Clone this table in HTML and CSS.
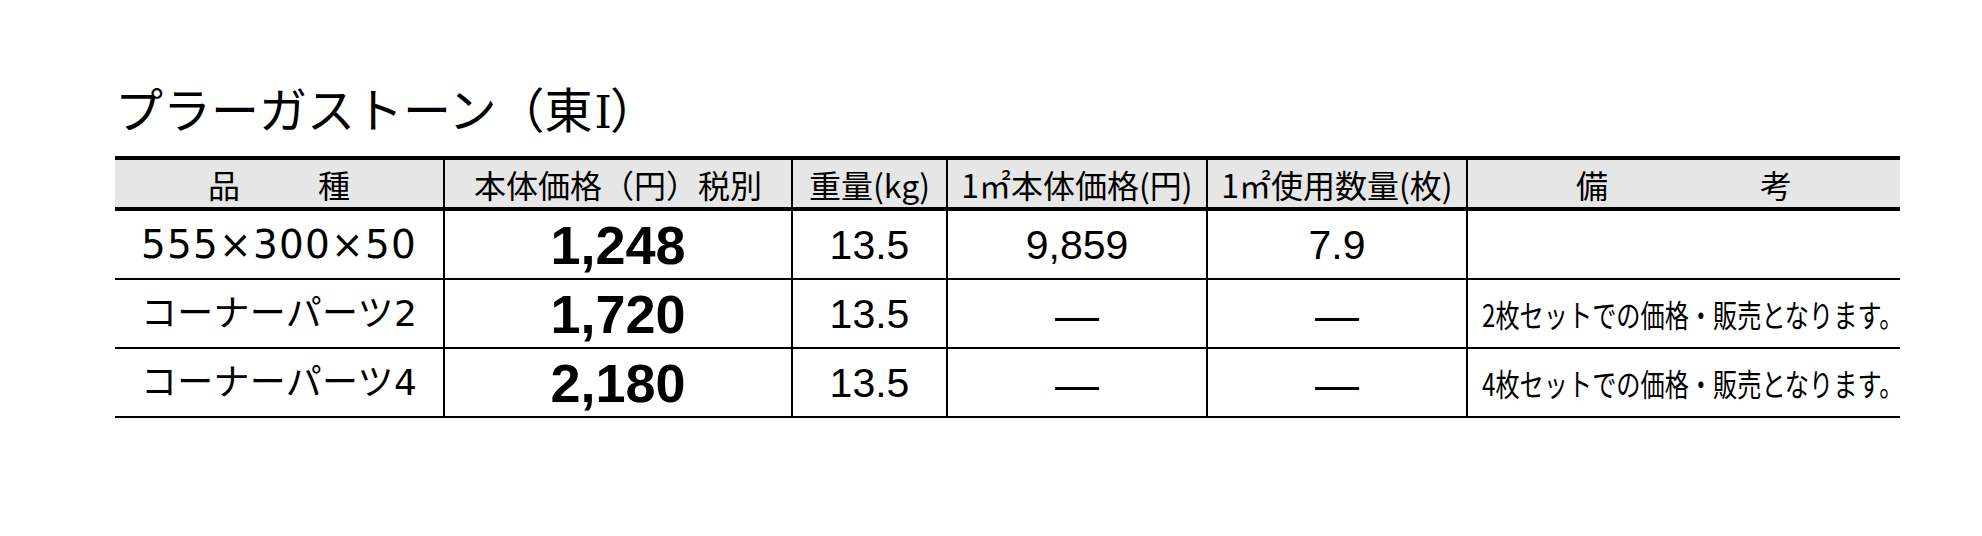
FILE: index.html
```html
<!DOCTYPE html>
<html lang="ja">
<head>
<meta charset="utf-8">
<title>プラーガストーン（東Ⅰ）</title>
<link rel="stylesheet" href="styles.css">
</head>
<body>
<div class="page">
  <h1 class="title">プラーガストーン（東<span class="roman">Ⅰ</span>）</h1>
  <div class="grid">
    <div class="cell head split first"><span>品</span><span>種</span></div>
    <div class="cell head">本体価格（円）税別</div>
    <div class="cell head">重量(kg)</div>
    <div class="cell head">1㎡本体価格(円)</div>
    <div class="cell head">1㎡使用数量(枚)</div>
    <div class="cell head split wide"><span>備</span><span>考</span></div>

    <div class="cell size first">555×300×50</div>
    <div class="cell price">1,248</div>
    <div class="cell num">13.5</div>
    <div class="cell num">9,859</div>
    <div class="cell num">7.9</div>
    <div class="cell note"></div>

    <div class="cell kana first">コーナーパーツ2</div>
    <div class="cell price">1,720</div>
    <div class="cell num">13.5</div>
    <div class="cell dash">—</div>
    <div class="cell dash">—</div>
    <div class="cell note"><span class="note-text">2枚セットでの価格・販売となります。</span></div>

    <div class="cell kana first">コーナーパーツ4</div>
    <div class="cell price">2,180</div>
    <div class="cell num">13.5</div>
    <div class="cell dash">—</div>
    <div class="cell dash">—</div>
    <div class="cell note"><span class="note-text">4枚セットでの価格・販売となります。</span></div>
  </div>
</div>
</body>
</html>
```
FILE: styles.css
```css
html, body {
  margin: 0;
  padding: 0;
  background: #ffffff;
}

.page {
  padding: 83px 0 0 115px;
  font-family: "Noto Sans CJK JP", "Liberation Sans", sans-serif;
  color: #000;
}

.title {
  margin: 0 0 25px 0;
  height: 48px;
  font-size: 48px;
  font-weight: 400;
  line-height: 48px;
  letter-spacing: 0;
  white-space: nowrap;
}

.roman {
  font-family: "DejaVu Serif", "Liberation Serif", serif;
  font-size: 44px;
  line-height: 0;
  margin: 0 -2px 0 2px;
}

.grid {
  display: grid;
  grid-template-columns: 328px 348px 155px 260px 260px 434px;
  grid-template-rows: 51px 69px 69px 69px;
  width: 1785px;
  border-top: 4px solid #000;
}

.cell {
  box-sizing: border-box;
  display: flex;
  align-items: center;
  justify-content: center;
  border-left: 2px solid #000;
  border-bottom: 2px solid #000;
  white-space: nowrap;
}

.cell.first {
  border-left: none;
}

.head {
  background: #e6e6e6;
  border-bottom: 4px solid #000;
  font-family: "Noto Sans CJK JP", sans-serif;
  font-size: 32px;
  line-height: 1;
}

.split {
  gap: 78px;
}

.split.wide {
  gap: 152px;
}

.size {
  font-family: "DejaVu Sans", sans-serif;
  font-size: 39px;
  letter-spacing: 1.2px;
}

.kana {
  font-family: "DejaVu Sans", "Noto Sans CJK JP", sans-serif;
  font-size: 36px;
  line-height: 1;
  letter-spacing: 0.3px;
}

.price {
  font-family: "Liberation Sans", Arial, sans-serif;
  font-weight: 700;
  font-size: 54px;
  line-height: 1;
}

.num {
  font-family: "Liberation Sans", Arial, sans-serif;
  font-size: 41px;
  line-height: 1;
  padding-top: 2px;
}

.dash {
  font-family: "Liberation Sans", Arial, sans-serif;
  font-size: 44px;
  line-height: 1;
  padding-top: 4px;
}

.note {
  justify-content: flex-start;
  padding-left: 14px;
}

.note-text {
  display: inline-block;
  font-family: "Noto Sans CJK JP", sans-serif;
  font-size: 31px;
  line-height: 1;
  margin-right: -130px;
  transform: scaleX(0.78);
  transform-origin: left center;
}
```
